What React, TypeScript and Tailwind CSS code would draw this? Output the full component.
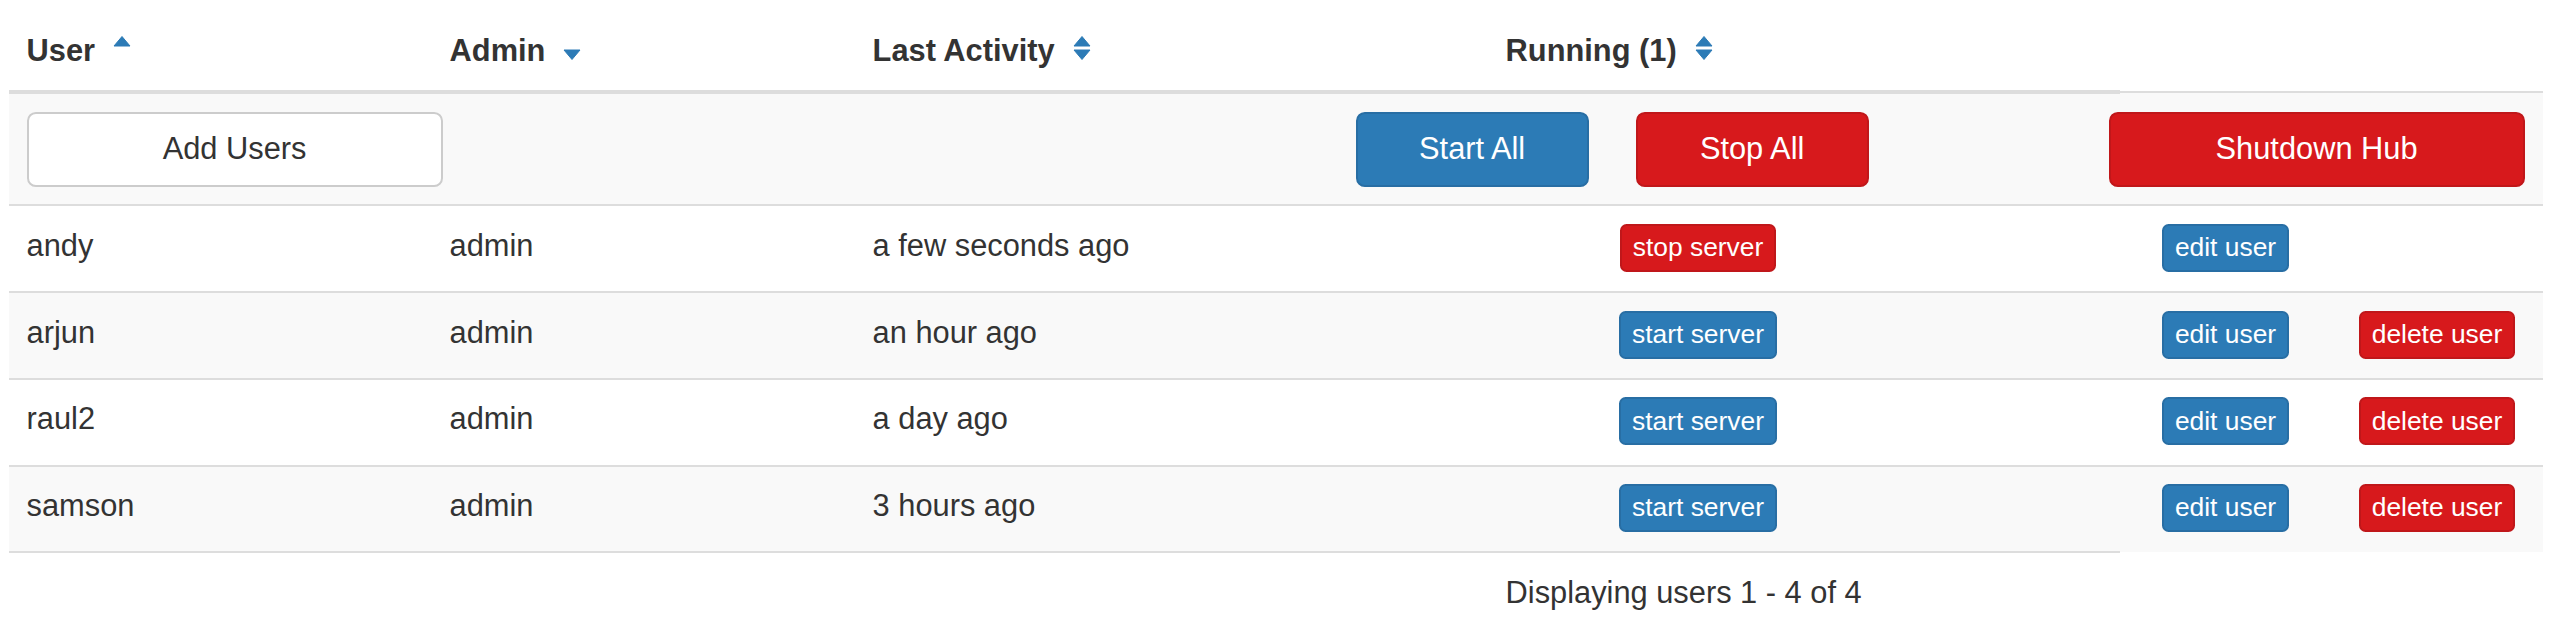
import React from "react";

type Usuario = {
  nome: string;
  atividade: string;
  rodando: boolean;
  podeApagar: boolean;
};

const usuarios: Usuario[] = [
  { nome: "andy", atividade: "a few seconds ago", rodando: true, podeApagar: false },
  { nome: "arjun", atividade: "an hour ago", rodando: false, podeApagar: true },
  { nome: "raul2", atividade: "a day ago", rodando: false, podeApagar: true },
  { nome: "samson", atividade: "3 hours ago", rodando: false, podeApagar: true },
];

function SortIcon({ dir }: { dir: "asc" | "desc" | "both" }) {
  return (
    <svg width="18" height="26" viewBox="0 0 18 26" className="inline-block ml-[18px] align-baseline">
      {(dir === "asc" || dir === "both") && (
        <path d="M9 1.5 L17 11 L1 11 Z" fill="#2c7bb6" stroke="#2c7bb6" strokeWidth="1" strokeLinejoin="round" />
      )}
      {(dir === "desc" || dir === "both") && (
        <path d="M1 15 L17 15 L9 24.5 Z" fill="#2c7bb6" stroke="#2c7bb6" strokeWidth="1" strokeLinejoin="round" />
      )}
    </svg>
  );
}

const th = "text-left font-bold align-bottom p-[17.6px] leading-[44px] border-b-[4.4px] border-[#ddd]";
const td = "align-top p-[17.6px] leading-[44px] border-t-[2.2px] border-[#ddd]";
const tdUser = "align-top px-[17.6px] pt-[17.6px] pb-[19.2px] leading-[44px] border-t-[2.2px] border-[#ddd]";
const btnXs =
  "inline-block text-white text-[26.4px] leading-[39.6px] px-[11px] py-[2.2px] border-[2.2px] rounded-[6.6px] align-baseline";
const azul = "bg-[#2c7bb6] border-[#286ea4]";
const vermelho = "bg-[#d7191c] border-[#c0171a]";
const btn =
  "h-[75px] flex items-center justify-center rounded-[8.8px] border-[2.2px] text-[30.8px]";

export default function App() {
  return (
    <div
      className="w-[2567px] h-[618px] overflow-hidden bg-white text-[#333] text-[30.8px]"
      style={{ fontFamily: '"Liberation Sans", Arial, Helvetica, sans-serif' }}
    >
      <table className="table-fixed border-collapse w-[2534px] ml-[9px] mt-[11px]">
        <colgroup>
          <col className="w-[423px]" />
          <col className="w-[423px]" />
          <col className="w-[633px]" />
          <col className="w-[420px]" />
          <col className="w-[212px]" />
          <col className="w-[211px]" />
          <col className="w-[212px]" />
        </colgroup>
        <thead>
          <tr>
            <th className={th}>
              User
              <SortIcon dir="asc" />
            </th>
            <th className={th}>
              Admin
              <SortIcon dir="desc" />
            </th>
            <th className={th}>
              Last Activity
              <SortIcon dir="both" />
            </th>
            <th className={th} colSpan={2}>
              Running (1)
              <SortIcon dir="both" />
            </th>
          </tr>
        </thead>
        <tbody>
          <tr className="bg-[#f9f9f9]">
            <td className={td} colSpan={7}>
              <div className="flex">
                <a className={`${btn} w-[416px] bg-white border-[#ccc] text-[#333]`}>Add Users</a>
                <a className={`${btn} ml-[913px] w-[233px] ${azul} text-white`}>Start All</a>
                <a className={`${btn} ml-[47px] w-[233px] ${vermelho} text-white`}>Stop All</a>
                <a className={`${btn} ml-[240px] w-[416px] ${vermelho} text-white`}>Shutdown Hub</a>
              </div>
            </td>
          </tr>
          {usuarios.map((u, i) => (
            <tr key={u.nome} className={i % 2 === 1 ? "bg-[#f9f9f9]" : "bg-white"}>
              <td className={tdUser}>{u.nome}</td>
              <td className={tdUser}>admin</td>
              <td className={tdUser}>{u.atividade}</td>
              <td className={`${tdUser} text-center`}>
                {u.rodando ? (
                  <a className={`${btnXs} ${vermelho}`}>stop server</a>
                ) : (
                  <a className={`${btnXs} ${azul}`}>start server</a>
                )}
              </td>
              <td className={tdUser}></td>
              <td className={`${tdUser} text-center`}>
                <a className={`${btnXs} ${azul}`}>edit user</a>
              </td>
              <td className={`${tdUser} text-center`}>
                {u.podeApagar && <a className={`${btnXs} ${vermelho}`}>delete user</a>}
              </td>
            </tr>
          ))}
        </tbody>
        <tfoot>
          <tr>
            <td className={`${td} pb-0`} colSpan={3}></td>
            <td className={`${td} pb-0`} colSpan={2}>
              Displaying users 1 - 4 of 4
            </td>
          </tr>
        </tfoot>
      </table>
    </div>
  );
}
